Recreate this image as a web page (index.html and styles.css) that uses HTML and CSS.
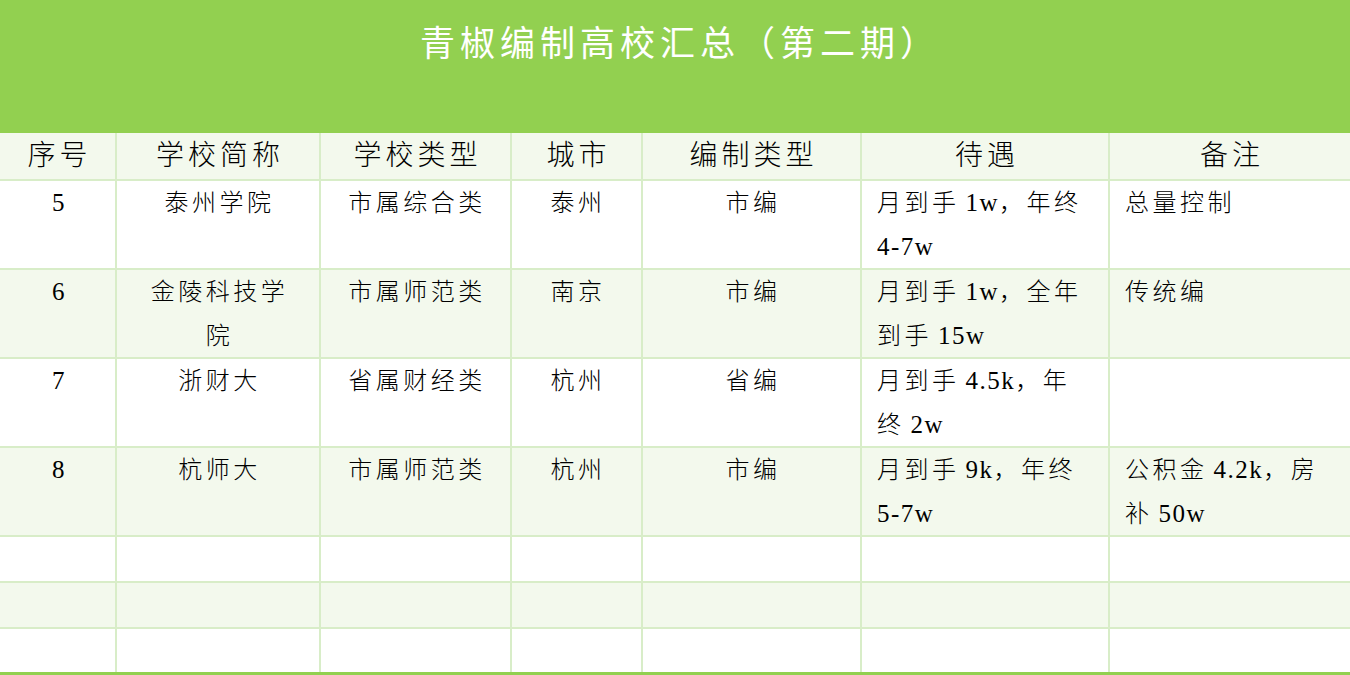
FILE: index.html
```html
<!DOCTYPE html>
<html lang="zh-CN">
<head>
<meta charset="utf-8">
<title>青椒编制高校汇总（第二期）</title>
<link rel="stylesheet" href="styles.css">
</head>
<body>
<div class="page">
  <header class="banner">
    <h1 class="title">青椒编制高校汇总（第二期）</h1>
  </header>
  <div class="sheet">
    <div class="row head">
      <div class="cell">序号</div>
      <div class="cell">学校简称</div>
      <div class="cell">学校类型</div>
      <div class="cell">城市</div>
      <div class="cell">编制类型</div>
      <div class="cell">待遇</div>
      <div class="cell">备注</div>
    </div>
    <div class="row data">
      <div class="cell c"><span class="lat">5</span></div>
      <div class="cell c">泰州学院</div>
      <div class="cell c">市属综合类</div>
      <div class="cell c">泰州</div>
      <div class="cell c">市编</div>
      <div class="cell l">月到手<span class="sp"> </span><span class="lat">1w</span>，年终<br><span class="lat">4-7w</span></div>
      <div class="cell l">总量控制</div>
    </div>
    <div class="row data alt">
      <div class="cell c"><span class="lat">6</span></div>
      <div class="cell c">金陵科技学<br>院</div>
      <div class="cell c">市属师范类</div>
      <div class="cell c">南京</div>
      <div class="cell c">市编</div>
      <div class="cell l">月到手<span class="sp"> </span><span class="lat">1w</span>，全年<br>到手<span class="sp"> </span><span class="lat">15w</span></div>
      <div class="cell l">传统编</div>
    </div>
    <div class="row data">
      <div class="cell c"><span class="lat">7</span></div>
      <div class="cell c">浙财大</div>
      <div class="cell c">省属财经类</div>
      <div class="cell c">杭州</div>
      <div class="cell c">省编</div>
      <div class="cell l">月到手<span class="sp"> </span><span class="lat">4.5k</span>，年<br>终<span class="sp"> </span><span class="lat">2w</span></div>
      <div class="cell l"></div>
    </div>
    <div class="row data alt">
      <div class="cell c"><span class="lat">8</span></div>
      <div class="cell c">杭师大</div>
      <div class="cell c">市属师范类</div>
      <div class="cell c">杭州</div>
      <div class="cell c">市编</div>
      <div class="cell l">月到手<span class="sp"> </span><span class="lat">9k</span>，年终<br><span class="lat">5-7w</span></div>
      <div class="cell l">公积金<span class="sp"> </span><span class="lat">4.2k</span>，房<br>补<span class="sp"> </span><span class="lat">50w</span></div>
    </div>
    <div class="row empty">
      <div class="cell"></div><div class="cell"></div><div class="cell"></div><div class="cell"></div><div class="cell"></div><div class="cell"></div><div class="cell"></div>
    </div>
    <div class="row empty alt">
      <div class="cell"></div><div class="cell"></div><div class="cell"></div><div class="cell"></div><div class="cell"></div><div class="cell"></div><div class="cell"></div>
    </div>
    <div class="row empty last">
      <div class="cell"></div><div class="cell"></div><div class="cell"></div><div class="cell"></div><div class="cell"></div><div class="cell"></div><div class="cell"></div>
    </div>
  </div>
</div>
</body>
</html>
```

FILE: styles.css
```css
* { box-sizing: border-box; }
html, body {
  margin: 0;
  padding: 0;
  background: #ffffff;
}
body {
  font-family: "Liberation Serif", "Noto Sans CJK SC", serif;
  color: #000000;
  width: 1350px;
  height: 675px;
  overflow: hidden;
}
.page {
  width: 1350px;
}
.banner {
  height: 133px;
  background: #92d050;
  padding-top: 20px;
}
.title {
  margin: 0;
  text-align: center;
  color: #ffffff;
  font-family: "Liberation Serif", "Noto Sans CJK SC", serif;
  font-weight: 400;
  font-size: 35px;
  line-height: 50px;
  letter-spacing: 5px;
  padding-left: 10px;
}
.sheet {
  display: flex;
  flex-direction: column;
}
.row {
  display: grid;
  grid-template-columns: 117px 204px 191px 131px 219px 248px 1fr;
  border-bottom: 2px solid #d8edc8;
}
.row.alt { background: #f3f9ed; }
.cell {
  border-right: 2px solid #d8edc8;
}
.cell:last-child { border-right: none; }
.head {
  height: 48px;
  background: #f3f9ed;
}
.head .cell {
  display: flex;
  align-items: center;
  justify-content: center;
  font-size: 28px;
  letter-spacing: 4px;
  padding-left: 4px;
  line-height: 1;
  font-weight: 300;
}
.data { height: 89px; }
.data .cell {
  font-size: 24px;
  line-height: 44px;
  letter-spacing: 3.5px;
  font-weight: 300;
}
.data .sp {
  letter-spacing: 0;
}
.data .lat {
  font-size: 25px;
  letter-spacing: 1.5px;
  font-weight: 400;
}
.data .c {
  text-align: center;
  padding-left: 3px;
}
.data .l {
  text-align: left;
  padding-left: 15px;
}
.empty { height: 46px; }
.empty.last {
  height: 46px;
  border-bottom: 3px solid #92d050;
}
```
